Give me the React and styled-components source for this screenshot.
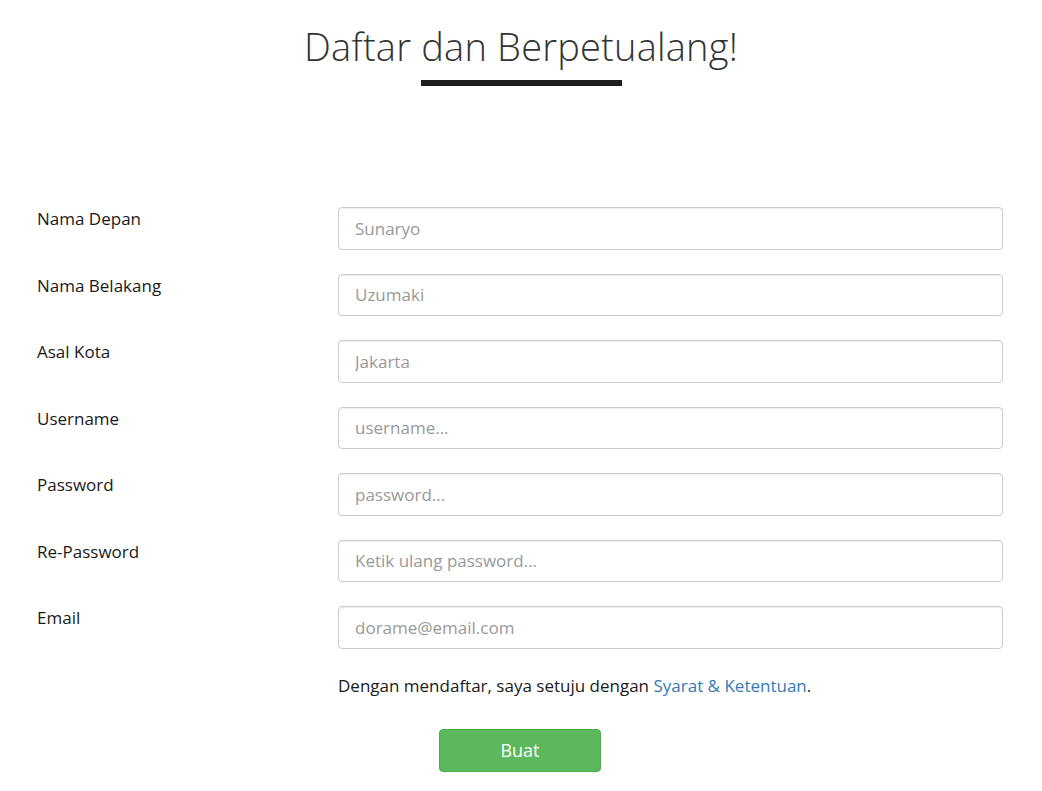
import React from 'react';
import styled, { createGlobalStyle } from 'styled-components';

const GlobalStyle = createGlobalStyle`
  body {
    margin: 0;
    background: #fff;
    font-family: "Open Sans", "Liberation Sans", sans-serif;
    color: #333;
  }
`

const Page = styled.div`
  width: 1042px;
  padding: 20px 39px 0 37px;
  box-sizing: border-box;
`

const Header = styled.div`
  display: flex;
  flex-direction: column;
  align-items: center;
  margin-left: -37px;
  margin-right: -39px;
`

const Title = styled.h1`
  margin: 0;
  font-size: 38px;
  font-weight: 300;
  line-height: 52px;
  color: #333;
  letter-spacing: 0.2px;
`

const Bar = styled.div`
  width: 201px;
  height: 6px;
  background: #1e1e1e;
  margin-top: 8px;
`

const Form = styled.form`
  display: flex;
  flex-direction: column;
  gap: 24px;
  margin-top: 121px;
`

const Row = styled.div`
  display: grid;
  grid-template-columns: 301px 1fr;
  align-items: start;
`

const Label = styled.label`
  font-size: 17px;
  font-weight: 500;
  color: #1a1a1a;
  padding-top: 1px;
  line-height: 22px;
`

const Input = styled.input`
  height: 42.5px;
  box-sizing: border-box;
  border: 1px solid #ccc;
  border-radius: 4px;
  padding: 6px 16px;
  font-family: "Open Sans", "Liberation Sans", sans-serif;
  font-size: 17px;
  color: #555;
  box-shadow: inset 0 1px 1px rgba(0, 0, 0, 0.075);
  &::placeholder {
    color: #999;
    font-weight: 400;
  }
`

const Agree = styled.p`
  margin: 25px 0 0 301px;
  font-size: 17px;
  line-height: 24px;
  font-weight: 500;
  color: #1a1a1a;
  a {
    color: #337ab7;
    text-decoration: none;
  }
`

const Actions = styled.div`
  display: flex;
  justify-content: center;
  margin: 31px -37px 0 -37px;
`

const Button = styled.button`
  width: 162px;
  height: 43px;
  background: #5cb85c;
  border: 1px solid #4cae4c;
  border-radius: 4px;
  color: #fff;
  font-family: "Open Sans", "Liberation Sans", sans-serif;
  font-size: 18px;
`

const fields = [
  ['Nama Depan', 'Sunaryo', 'text'],
  ['Nama Belakang', 'Uzumaki', 'text'],
  ['Asal Kota', 'Jakarta', 'text'],
  ['Username', 'username...', 'text'],
  ['Password', 'password...', 'password'],
  ['Re-Password', 'Ketik ulang password...', 'password'],
  ['Email', 'dorame@email.com', 'email'],
]

export default function App() {
  return (
    <Page>
      <GlobalStyle />
      <Header>
        <Title>Daftar dan Berpetualang!</Title>
        <Bar />
      </Header>
      <Form onSubmit={e => e.preventDefault()}>
        {fields.map(([label, ph, type]) => (
          <Row key={label}>
            <Label>{label}</Label>
            <Input type={type} placeholder={ph} />
          </Row>
        ))}
      </Form>
      <Agree>
        Dengan mendaftar, saya setuju dengan <a href="#">Syarat &amp; Ketentuan</a>.
      </Agree>
      <Actions>
        <Button type="button">Buat</Button>
      </Actions>
    </Page>
  )
}
